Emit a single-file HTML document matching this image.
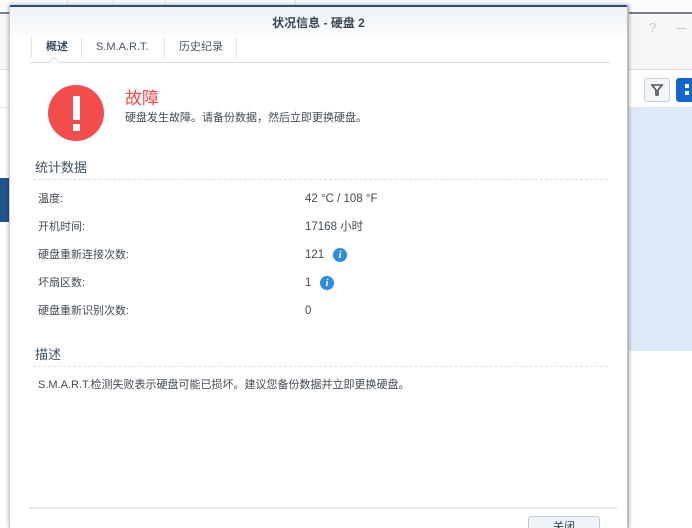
<!DOCTYPE html>
<html><head><meta charset="utf-8"><style>
*{margin:0;padding:0;box-sizing:border-box}
html,body{width:692px;height:528px;overflow:hidden}
body{position:relative;background:#fff;font-family:"Liberation Sans","Noto Sans CJK SC",sans-serif;color:#404a56}
.abs{position:absolute}
.t{font-size:11px;color:#414b55;line-height:16px;height:16px;white-space:nowrap}
.v{font-size:11.5px}
</style></head><body>
<div class="abs" style="left:0;top:0;width:692px;height:13px;background:#fafbfc"></div>
<div class="abs" style="left:0;top:12px;width:692px;height:2px;background:#7d8185"></div>
<div class="abs" style="left:0;top:14px;width:692px;height:56px;background:#f5f7f9"></div>
<div class="abs" style="left:0;top:69px;width:692px;height:1px;background:#dde1e5"></div>
<div class="abs" style="left:0;top:70px;width:692px;height:38px;background:#fff"></div>
<div class="abs" style="left:0;top:107px;width:692px;height:1px;background:#e2e6ea"></div>
<div class="abs" style="left:626px;top:108px;width:66px;height:243px;background:#dde9f8"></div>
<div class="abs" style="left:0;top:178px;width:12px;height:44px;background:#21548c"></div>
<div class="abs" style="left:649px;top:20px;color:#c5c9cd;font-size:13px">?</div>
<div class="abs" style="left:676px;top:28px;width:10px;height:1px;background:#c5c9cd"></div>
<div class="abs" style="left:644px;top:78px;width:26px;height:24px;border:1px solid #c9d0d8;border-radius:3px;background:#f3f6f9"></div>
<svg class="abs" style="left:649px;top:82px" width="16" height="16"><path d="M3 3 H13 L9 8 V13 H7 V8 Z" fill="none" stroke="#4a5560" stroke-width="1.6"/></svg>
<div class="abs" style="left:676px;top:78px;width:20px;height:24px;background:#1566cc;border-radius:3px"></div>
<div class="abs" style="left:685px;top:84px;width:4px;height:4px;background:#fff"></div>
<div class="abs" style="left:685px;top:91px;width:4px;height:4px;background:#fff"></div>
<div class="abs" style="left:67px;top:0;width:1px;height:12px;background:#dfe3e7"></div>
<div class="abs" style="left:113px;top:0;width:1px;height:12px;background:#dfe3e7"></div>
<div class="abs" style="left:165px;top:0;width:1px;height:12px;background:#dfe3e7"></div>
<div class="abs" style="left:295px;top:0;width:1px;height:12px;background:#dfe3e7"></div>
<!-- dialog -->
<div class="abs" style="left:9px;top:5px;width:620px;height:523px;background:#fff;box-shadow:0 0 4px rgba(0,0,0,.35);border-left:1px solid #c8ccd0;border-right:2px solid #b9bdc1"></div>
<div class="abs" style="left:10px;top:5px;width:617px;height:2px;background:#27507f"></div>
<div class="abs" style="left:10px;top:7px;width:617px;height:28px;background:linear-gradient(#eef2f6,#fafbfc)"></div>
<div class="abs" style="left:10px;top:14px;width:617px;text-align:center;font-size:12px;line-height:18px;font-weight:bold;color:#3a4654">状况信息 - 硬盘 2</div>
<div class="abs" style="left:31px;top:37px;width:1px;height:21px;background:#e1e5e9"></div>
<div class="abs" style="left:81px;top:37px;width:1px;height:21px;background:#e1e5e9"></div>
<div class="abs" style="left:164px;top:37px;width:1px;height:21px;background:#e1e5e9"></div>
<div class="abs" style="left:236px;top:37px;width:1px;height:21px;background:#e1e5e9"></div>
<div class="abs t" style="left:46px;top:39px;font-weight:bold;color:#354a60">概述</div>
<div class="abs t" style="left:96px;top:39px;color:#4a5866">S.M.A.R.T.</div>
<div class="abs t" style="left:179px;top:39px;color:#4a5866">历史纪录</div>
<div class="abs" style="left:30px;top:62px;width:580px;height:1px;background:#dadee2"></div>
<svg class="abs" style="left:48px;top:57px" width="12" height="7"><path d="M0 6 L6 0 L12 6" fill="#fff" stroke="#dadee2"/></svg>
<div class="abs" style="left:48px;top:85px;width:56px;height:56px;border-radius:50%;background:#f24c4c"></div>
<div class="abs" style="left:73px;top:96px;width:7px;height:24px;background:#fff"></div>
<div class="abs" style="left:73px;top:124px;width:7px;height:7px;background:#fff"></div>
<div class="abs" style="left:125px;top:87px;font-size:17px;line-height:24px;color:#f2484a">故障</div>
<div class="abs t" style="left:125px;top:110px">硬盘发生故障。请备份数据，然后立即更换硬盘。</div>
<div class="abs" style="left:35px;top:158px;font-size:13px;line-height:20px;color:#3e5168">统计数据</div>
<div class="abs" style="left:33px;top:179px;width:575px;border-top:1px dashed #d7e1ec"></div>
<div class="abs t" style="left:38px;top:191px">温度:</div>
<div class="abs t v" style="left:305px;top:191px">42 °C / 108 °F</div>
<div class="abs t" style="left:38px;top:219px">开机时间:</div>
<div class="abs t v" style="left:305px;top:219px">17168 小时</div>
<div class="abs t" style="left:38px;top:247px">硬盘重新连接次数:</div>
<div class="abs t v" style="left:305px;top:247px">121</div>
<div class="abs" style="left:333px;top:248px;width:14px;height:14px;border-radius:50%;background:#2b8de0;color:#fff;font-size:11px;font-weight:bold;font-style:italic;text-align:center;line-height:14px;font-family:'Liberation Serif',serif">i</div>
<div class="abs t" style="left:38px;top:275px">坏扇区数:</div>
<div class="abs t v" style="left:305px;top:275px">1</div>
<div class="abs" style="left:320px;top:276px;width:14px;height:14px;border-radius:50%;background:#2b8de0;color:#fff;font-size:11px;font-weight:bold;font-style:italic;text-align:center;line-height:14px;font-family:'Liberation Serif',serif">i</div>
<div class="abs t" style="left:38px;top:303px">硬盘重新识别次数:</div>
<div class="abs t v" style="left:305px;top:303px">0</div>
<div class="abs" style="left:35px;top:345px;font-size:13px;line-height:20px;color:#3e5168">描述</div>
<div class="abs" style="left:33px;top:366px;width:575px;border-top:1px dashed #d7e1ec"></div>
<div class="abs t" style="left:38px;top:377px">S.M.A.R.T.检测失败表示硬盘可能已损坏。建议您备份数据并立即更换硬盘。</div>
<div class="abs" style="left:29px;top:507px;width:588px;height:2px;background:#e6e8ea"></div>
<div class="abs" style="left:528px;top:516px;width:72px;height:24px;border:1px solid #c5ccd4;border-radius:3px;background:#eef3f8;text-align:center;font-size:11px;line-height:20px;color:#3a4654">关闭</div>
</body></html>
